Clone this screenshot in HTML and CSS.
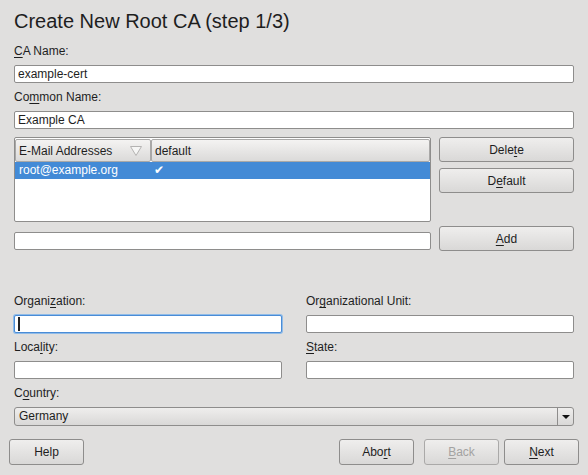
FILE: index.html
```html
<!DOCTYPE html>
<html lang="en">

<head>
    <meta charset="UTF-8">
    <title>Create New Root CA</title>
    <link rel="stylesheet" href="styles.css">
</head>

<body>
    <div class="dialog">
        <h1 class="title">Create New Root CA (step 1/3)</h1>

        <div class="top-fields">
            <div class="field">
                <label><u>C</u>A Name:</label>
                <input class="entry" type="text" value="example-cert">
            </div>
            <div class="field">
                <label>Co<u>m</u>mon Name:</label>
                <input class="entry" type="text" value="Example CA">
            </div>
        </div>

        <div class="mail-area">
            <div class="mail-left">
                <div class="list">
                    <div class="list-head">
                        <div class="col-head col-mail">
                            E-Mail Addresses
                            <svg class="sort" width="12" height="10" viewBox="0 0 12 10">
                                <polygon points="0.5,0.5 11.5,0.5 6,9.5" fill="#f6f6f5" stroke="#b4b3b2" stroke-width="1"/>
                            </svg>
                        </div>
                        <div class="col-head col-default">default</div>
                    </div>
                    <div class="row selected">
                        <div class="cell col-mail">root@example.org</div>
                        <div class="cell col-default check">✔</div>
                    </div>
                </div>
                <input class="entry new-mail" type="text" value="">
            </div>
            <div class="mail-buttons">
                <button class="btn side-btn">Dele<u>t</u>e</button>
                <button class="btn side-btn btn-default">D<u>e</u>fault</button>
                <button class="btn side-btn btn-add"><u>A</u>dd</button>
            </div>
        </div>

        <div class="org-grid">
            <div class="field">
                <label>Organi<u>z</u>ation:</label>
                <div class="focus-wrap">
                    <input class="entry focused" type="text" value="">
                </div>
            </div>
            <div class="field">
                <label>Or<u>g</u>anizational Unit:</label>
                <input class="entry" type="text" value="">
            </div>
            <div class="field">
                <label>Loca<u>l</u>ity:</label>
                <input class="entry" type="text" value="">
            </div>
            <div class="field">
                <label><u>S</u>tate:</label>
                <input class="entry" type="text" value="">
            </div>
            <div class="field wide">
                <label>C<u>o</u>untry:</label>
                <div class="combo">
                    <span class="combo-text">Germany</span>
                    <span class="combo-btn"><span class="arrow"></span></span>
                </div>
            </div>
        </div>
    </div>

    <div class="footer">
        <button class="btn foot-btn">Help</button>
        <div class="spacer"></div>
        <button class="btn foot-btn">Abo<u>r</u>t</button>
        <button class="btn foot-btn btn-back" disabled><u>B</u>ack</button>
        <button class="btn foot-btn btn-next"><u>N</u>ext</button>
    </div>
</body>

</html>
```

FILE: styles.css
```css
body {
    margin: 0;
    width: 588px;
    height: 475px;
    overflow: hidden;
    background: #e0dfde;
    font: 12px "Liberation Sans", Arial, sans-serif;
    color: #1e1e1e;
}
u {
    text-underline-offset: 2px;
}
.dialog {
    padding: 9px 14px 0;
}
.title {
    margin: 0;
    font-size: 20px;
    font-weight: normal;
    line-height: 24px;
}
.top-fields {
    margin-top: 11px;
    display: flex;
    flex-direction: column;
    gap: 7px;
}
.field label {
    display: block;
    line-height: 15px;
    margin-bottom: 6px;
}
.entry {
    display: block;
    box-sizing: border-box;
    width: 100%;
    height: 18px;
    margin: 0;
    padding: 0 3px;
    border: 1px solid #8e8d8c;
    border-radius: 2px;
    background: #fff;
    font: inherit;
    color: inherit;
    outline: none;
}
.focus-wrap {
    position: relative;
}
.focus-wrap::after {
    content: "";
    position: absolute;
    left: 4px;
    top: 2px;
    width: 2px;
    height: 14px;
    background: #222;
}
.entry.focused {
    border-color: #4a8cd6;
    box-shadow: 0 0 0 1px #8fbbe8;
}

/* mail list */
.mail-area {
    display: flex;
    gap: 8px;
    margin-top: 8px;
}
.mail-left {
    width: 417px;
    flex: none;
}
.list {
    box-sizing: border-box;
    height: 85px;
    padding-top: 1px;
    border: 1px solid #8e8d8c;
    border-radius: 2px;
    background: #fff;
}
.list-head {
    display: flex;
}
.col-head {
    box-sizing: border-box;
    height: 23px;
    display: flex;
    align-items: center;
    padding-left: 3px;
    border: 1px solid #a9a8a7;
    border-radius: 2px;
    background: linear-gradient(#f4f3f2, #dbdad9);
}
.col-mail {
    width: 136px;
    flex: none;
}
.col-default {
    flex: 1;
}
.sort {
    margin-left: auto;
    margin-right: 8px;
}
.row {
    display: flex;
    height: 17px;
    line-height: 17px;
}
.row.selected {
    background: #438ad6;
    color: #fff;
}
.cell {
    box-sizing: border-box;
    padding-left: 4px;
}
.check {
    font-family: "DejaVu Sans", sans-serif;
    font-size: 12px;
    padding-left: 3px;
}
.new-mail {
    margin-top: 10px;
}
.mail-buttons {
    width: 135px;
    flex: none;
    display: flex;
    flex-direction: column;
}

/* buttons */
.btn {
    box-sizing: border-box;
    margin: 0;
    padding: 0;
    border: 1px solid #8e8d8c;
    border-radius: 3px;
    background: linear-gradient(#efeeed, #d9d8d7);
    font: inherit;
    color: #1e1e1e;
    text-align: center;
}
.side-btn {
    height: 25px;
    width: 135px;
}
.btn-default {
    margin-top: 6px;
}
.btn-add {
    margin-top: 33px;
}

/* organization */
.org-grid {
    margin-top: 43px;
    display: grid;
    grid-template-columns: 268px 268px;
    column-gap: 24px;
    row-gap: 7px;
}
.wide {
    grid-column: 1 / -1;
}
.combo {
    box-sizing: border-box;
    height: 19px;
    margin-top: 1px;
    display: flex;
    border: 1px solid #8e8d8c;
    border-radius: 3px;
    background: linear-gradient(#efeeed, #d9d8d7);
}
.combo-text {
    flex: 1;
    padding-left: 4px;
    line-height: 17px;
}
.combo-btn {
    width: 15px;
    border-left: 1px solid #8e8d8c;
    display: flex;
    align-items: center;
    justify-content: center;
}
.arrow {
    width: 0;
    height: 0;
    border-left: 4px solid transparent;
    border-right: 4px solid transparent;
    border-top: 4px solid #111;
}

/* footer */
.footer {
    display: flex;
    padding: 0 9px;
    margin-top: 13px;
}
.spacer {
    flex: 1;
}
.foot-btn {
    width: 75px;
    height: 26px;
}
.btn-back {
    margin-left: 10px;
    color: #a3a2a1;
    border-color: #aaa9a8;
}
.btn-next {
    margin-left: 5px;
}
```
